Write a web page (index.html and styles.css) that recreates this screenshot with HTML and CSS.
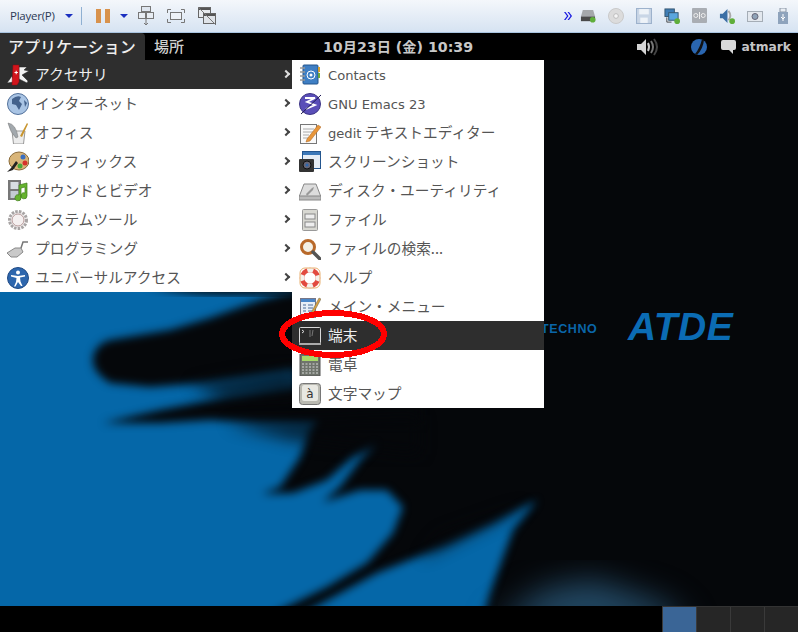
FILE: index.html
```html
<!DOCTYPE html>
<html lang="ja">
<head>
<meta charset="utf-8">
<title>ATDE</title>
<link rel="stylesheet" href="styles.css">
</head>
<body>
<div class="screen">
  <header class="toolbar">
    <span class="player">Player(P)</span>
    <svg class="caret" viewBox="0 0 8 4"><path d="M0 0h8L4 4z"/></svg>
    <span class="tb-sep"></span>
    <svg class="pause" viewBox="0 0 14 14"><rect width="5" height="14"/><rect x="9" width="5" height="14"/></svg>
    <svg class="caret caret-b" viewBox="0 0 8 4"><path d="M0 0h8L4 4z"/></svg>
    <svg class="tb-ic ic-a" viewBox="0 0 16 20"><g fill="none" stroke="#777"><rect x="3.500" y=".5" width="9" height="5" fill="#dfe6ef"/><rect x=".5" y="6.500" width="7" height="6" fill="#e8edf3"/><rect x="8.500" y="6.500" width="7" height="6" fill="#e8edf3"/><path d="M8 13v6M6 17l2 2 2-2"/></g></svg>
    <svg class="tb-ic ic-b" viewBox="0 0 18 14"><g fill="none" stroke="#777"><rect x="3.500" y="3.500" width="11" height="7" fill="#eef2f7"/><path d="M.5 4V.5H4M14 .5h3.500V4M.5 10v3.500H4M14 13.500h3.500V10"/></g></svg>
    <svg class="tb-ic ic-c" viewBox="0 0 18 18"><rect x=".5" y=".5" width="12" height="10" fill="#e8ebef" stroke="#666"/><rect x="5.500" y="6.500" width="12" height="10" fill="#dfe3e8" stroke="#666"/><rect x="1" y="1" width="11" height="2" fill="#555"/><rect x="6" y="7" width="11" height="2" fill="#555"/><path d="M0 0l18 18" stroke="#777"/></svg>
    <span class="tb-spacer"></span>
    <svg class="chev" viewBox="0 0 8 8"><path d="M0 0l3 4-3 4h1.500l3-4-3-4zM3.500 0l3 4-3 4H5l3-4-3-4z"/></svg>
    <div class="devices">
      <svg class="dev" viewBox="0 0 17 15"><path d="M3 1h11l2 7H1z" fill="#a5a8ab"/><rect x="1" y="8" width="15" height="5" fill="#4a4a4a"/><circle cx="13.500" cy="11.500" r="3" fill="#5fae3a"/></svg>
      <svg class="dev" viewBox="0 0 17 17"><circle cx="8.500" cy="8.500" r="8" fill="#dcdcdc" stroke="#c8c8c8"/><circle cx="8.500" cy="8.500" r="2.500" fill="#f5f5f5" stroke="#bbb"/></svg>
      <svg class="dev" viewBox="0 0 15 15"><rect x=".5" y=".5" width="14" height="14" fill="#c9d6e6" stroke="#9db2cc"/><rect x="3" y="1" width="9" height="5" fill="#eef3f8"/><rect x="4" y="9" width="7" height="5" fill="#eef3f8"/></svg>
      <svg class="dev" viewBox="0 0 17 17"><rect x="1" y="1" width="10" height="8" fill="#3f7db5" stroke="#33556f"/><rect x="5" y="5" width="10" height="8" fill="#5aa6de" stroke="#33556f"/><path d="M3 10v5h5" fill="none" stroke="#444"/><circle cx="14" cy="14" r="3" fill="#5fae3a"/></svg>
      <svg class="dev dev-wide" viewBox="0 0 15 15"><rect width="15" height="15" rx="1" fill="#a9adb3"/><circle cx="3.800" cy="7.500" r="2" fill="none" stroke="#eee"/><circle cx="11.200" cy="7.500" r="2" fill="none" stroke="#eee"/><path d="M7.500 4v7" stroke="#eee"/></svg>
      <svg class="dev" viewBox="0 0 17 17"><path d="M1 6h3l5-5v15l-5-5H1z" fill="#3a6ea5"/><path d="M10 3q4 5 0 10" fill="none" stroke="#aaa" stroke-width="2"/><circle cx="14" cy="14" r="3" fill="#5fae3a"/></svg>
      <svg class="dev" viewBox="0 0 16 12"><rect x=".5" y="1.500" width="15" height="10" fill="#e3e8ee" stroke="#a5adb6"/><circle cx="8" cy="6.500" r="3" fill="#8fa3b8" stroke="#667"/></svg>
      <svg class="dev dev-usb" viewBox="0 0 10 16"><rect x="2" y="0" width="6" height="4" fill="#e8edf3" stroke="#8a96a6"/><rect y="4" width="10" height="12" fill="#8ea3bc"/><path d="M5 6v7M3 9l2 2 2-2" stroke="#fff" fill="none"/></svg>
    </div>
  </header>

  <nav class="panel">
    <div class="panel-left">
      <span class="panel-menu is-open">アプリケーション</span>
      <span class="panel-menu">場所</span>
    </div>
    <span class="clock">10月23日 (金) 10:39</span>
    <div class="panel-right">
      <svg class="vol" viewBox="0 0 22 18"><path d="M0 6h4l5-5v16l-5-5H0z" fill="#d4d4d4"/><path d="M11 5q2 4 0 8" fill="none" stroke="#c8c8c8" stroke-width="2"/><path d="M14 3q4 6 0 12" fill="none" stroke="#777" stroke-width="2"/><path d="M17 1q6 8 0 16" fill="none" stroke="#444" stroke-width="2"/></svg>
      <svg class="ime" viewBox="0 0 16 16"><circle cx="8" cy="8" r="8" fill="#2a66b0"/><path d="M11 0Q9 9 4 15l2 1q6-6 7-15z" fill="#111"/></svg>
      <svg class="chat" viewBox="0 0 15 14"><path d="M2 0h11a2 2 0 0 1 2 2v6a2 2 0 0 1-2 2h-1v4L8 10H2a2 2 0 0 1-2-2V2a2 2 0 0 1 2-2z" fill="#d8d8d8"/></svg>
      <span class="user">atmark</span>
    </div>
  </nav>

  <main class="desktop">
    <svg class="wallpaper" viewBox="0 60 798 546" preserveAspectRatio="none">
      <defs>
        <filter id="b1" x="-20%" y="-20%" width="140%" height="140%" color-interpolation-filters="sRGB"><feGaussianBlur stdDeviation="4.500"/></filter>
        <filter id="b2" x="-30%" y="-30%" width="160%" height="160%" color-interpolation-filters="sRGB"><feGaussianBlur stdDeviation="8"/></filter>
        <filter id="b3" x="-40%" y="-40%" width="180%" height="180%" color-interpolation-filters="sRGB"><feGaussianBlur stdDeviation="16"/></filter>
      </defs>
      <rect x="0" y="60" width="798" height="546" fill="#05070a"/>
      <path class="wp-blue" filter="url(#b1)" d="M-30 200H295V392L320 408 315 423 310 430 300 457 280 487 262 494 293 493 327 480 353 457 377 443 360 460 340 487 323 502 360 490 387 490 403 507 393 533 367 563 327 587 270 615H-30z"/>
      <path class="wp-blue" filter="url(#b1)" d="M300 615L377 573 427 553 493 523 537 500 513 530 503 557 490 593 484 615z"/>
      <path class="wp-dim" filter="url(#b3)" d="M490 630L543 590 593 580 665 605 690 630z"/>
      <path class="wp-dark" filter="url(#b1)" d="M93 357C96 345 104 342 110 340L170 330 210 318 260 300 287 293H420V390L293 370 247 377 203 383 150 387 110 383C98 375 92 368 93 357z"/>
      <path class="wp-dark" filter="url(#b1)" d="M103 423L160 410 227 397 293 387H420V425L260 423 210 420 160 423z"/>
      <path class="wp-dark" filter="url(#b1)" d="M147 285H300V293C240 295 190 297 147 285z"/>
      <path class="wp-strip" filter="url(#b2)" d="M190 385L300 365V395L225 400z"/>
      <path class="wp-strip" filter="url(#b2)" d="M225 424L420 415V455L290 440z"/>
      <path class="wp-strip" filter="url(#b2)" d="M420 560L500 520 530 505 510 510 440 535z"/>
    </svg>
    <span class="brand-techno">TECHNO</span>
    <span class="brand-atde">ATDE</span>

    <div class="menus">
      <ul class="menu menu-main">
        <li class="item is-active"><svg class="ic" viewBox="0 0 22 22"><path d="M0 19l5-7 2 6zM12 3h8l-3 3 5 1-7 4 6 6-1 2-8-4z" fill="#f2f2f2" stroke="#222" stroke-width=".5"/><path d="M6 1h6v17l-2 3H5z" fill="#d2151c" stroke="#8a0d12" stroke-width=".5"/><path d="M7.500 8h1.200V6.800h1V8h1.200v1H9.700v1.200h-1V9H7.500z" fill="#fff"/></svg><span class="label">アクセサリ</span><span class="arrow"></span></li>
        <li class="item"><svg class="ic" viewBox="0 0 22 22"><circle cx="11" cy="11" r="10.500" fill="#a9c4e4" stroke="#52719b"/><path d="M5 6q5-4 9-2l-2 4 3 3-3 6-3-5-4-1z" fill="#44628c"/><path d="M17 7l3 3-2 4z" fill="#44628c"/></svg><span class="label">インターネット</span><span class="arrow"></span></li>
        <li class="item"><svg class="ic" viewBox="0 0 22 22"><path d="M5 9h13l-1.500 13H6.500z" fill="#ececec" stroke="#999"/><path d="M1 1q8 1 10 14l-2 1Q3 10 1 1z" fill="#a2a8ad" stroke="#777" stroke-width=".5"/><path d="M20 1l1 1-6 13-2-1z" fill="#c8952e"/></svg><span class="label">オフィス</span><span class="arrow"></span></li>
        <li class="item"><svg class="ic" viewBox="0 0 22 22"><ellipse cx="12" cy="10" rx="10" ry="9" fill="#d9b579" stroke="#8a6a38"/><circle cx="16" cy="6" r="2.500" fill="#3a6fc0"/><circle cx="18" cy="12" r="2.500" fill="#d6322c"/><circle cx="13" cy="15" r="2.500" fill="#4aa83a"/><path d="M9 10l-5 7-4 4 6-2 5-7z" fill="#222"/></svg><span class="label">グラフィックス</span><span class="arrow"></span></li>
        <li class="item"><svg class="ic" viewBox="0 0 22 22"><rect x="1" y="0" width="13" height="20" fill="#777"/><rect x="3.500" y="2" width="8" height="7" fill="#d8dde2"/><rect x="3.500" y="11" width="8" height="7" fill="#c4cbd2"/><path d="M12 5l8-2v13a3 3 0 1 1-2-3V7l-4 1v10a3 3 0 1 1-2-3z" fill="#66b32e" stroke="#3f7d1a" stroke-width=".7"/></svg><span class="label">サウンドとビデオ</span><span class="arrow"></span></li>
        <li class="item"><svg class="ic" viewBox="0 0 22 22"><circle cx="11" cy="11" r="8.500" fill="#f1eeee" stroke="#a8a4a4" stroke-width="3" stroke-dasharray="2.500 1.200"/><circle cx="11" cy="11" r="6" fill="#f5f0f0" stroke="#b79a9a"/></svg><span class="label">システムツール</span><span class="arrow"></span></li>
        <li class="item"><svg class="ic" viewBox="0 0 22 22"><path d="M0 15l8-5h6l2 4-6 5H4z" fill="#c9c9c9" stroke="#888"/><path d="M14 10l2-6h5" fill="none" stroke="#777" stroke-width="1.500"/></svg><span class="label">プログラミング</span><span class="arrow"></span></li>
        <li class="item"><svg class="ic" viewBox="0 0 22 22"><circle cx="11" cy="11" r="10.500" fill="#2d66ad" stroke="#1f4a85"/><circle cx="11" cy="5.500" r="2" fill="#fff"/><path d="M4 8l7 1 7-1v1.500l-5 1 .500 4 2 4.500h-1.500L11 15l-2.500 4.500H7l2-4.500.500-4-5.500-1.500z" fill="#fff"/></svg><span class="label">ユニバーサルアクセス</span><span class="arrow"></span></li>
      </ul>
      <ul class="menu menu-sub">
        <li class="item"><svg class="ic" viewBox="0 0 22 22"><rect x="4" y="1" width="15" height="19" rx="1" fill="#3f7fc4" stroke="#23548c"/><rect x="19" y="3" width="2" height="5" fill="#d8a030"/><rect x="19" y="9" width="2" height="5" fill="#6aa83c"/><path d="M1 4h5M1 8h5M1 12h5M1 16h5" stroke="#999" stroke-width="1.500"/><circle cx="12" cy="11" r="4" fill="none" stroke="#fff"/><circle cx="12" cy="11" r="1.500" fill="#fff"/></svg><span class="label latin">Contacts</span></li>
        <li class="item"><svg class="ic" viewBox="0 0 22 22"><circle cx="11" cy="11" r="10.500" fill="#5a4eb8" stroke="#3d3585"/><path d="M6 5h10L8 9l8 3-9 4" fill="none" stroke="#fff" stroke-width="1.800"/><path d="M22 2L2 21" stroke="#1f1a55"/></svg><span class="label latin">GNU Emacs 23</span></li>
        <li class="item"><svg class="ic" viewBox="0 0 22 22"><rect x="1.500" y="2.500" width="16" height="19" fill="#fafafa" stroke="#777"/><path d="M4 7h11M4 10h11M4 13h6M4 16h6" stroke="#aaa"/><path d="M8 17l11-14 3 2-11 14-4 1z" fill="#e8963a" stroke="#a86220" stroke-width=".5"/></svg><span class="label"><span class="latin">gedit</span> テキストエディター</span></li>
        <li class="item"><svg class="ic" viewBox="0 0 22 22"><rect x="3.500" y=".5" width="18" height="17" fill="#e6edf5" stroke="#23558e"/><rect x="4" y="1" width="17" height="3" fill="#3c78b8"/><rect x="0" y="8" width="15" height="13" rx="1" fill="#333"/><circle cx="8" cy="14" r="4" fill="#667" stroke="#111"/><circle cx="8" cy="14" r="1.500" fill="#2d66ad"/></svg><span class="label">スクリーンショット</span></li>
        <li class="item"><svg class="ic" viewBox="0 0 22 22"><path d="M5 4h12l5 13H0z" fill="#ddd" stroke="#888"/><rect y="16" width="22" height="4" fill="#bbb" stroke="#888"/><path d="M7 14l6-6 2-1-1 3-6 6z" fill="#999"/></svg><span class="label">ディスク・ユーティリティ</span></li>
        <li class="item"><svg class="ic" viewBox="0 0 22 22"><rect x="3.500" y=".5" width="15" height="21" rx="1" fill="#d8d8d2" stroke="#999"/><rect x="6" y="5" width="10" height="5" fill="#eee" stroke="#888"/><rect x="6" y="13" width="10" height="5" fill="#eee" stroke="#888"/></svg><span class="label">ファイル</span></li>
        <li class="item"><svg class="ic" viewBox="0 0 22 22"><circle cx="9" cy="9" r="6.500" fill="#f3f0e6" stroke="#b8692a" stroke-width="3"/><path d="M14 14l7 7" stroke="#555" stroke-width="3.500" stroke-linecap="round"/></svg><span class="label">ファイルの検索...</span></li>
        <li class="item"><svg class="ic" viewBox="0 0 22 22"><circle cx="11" cy="11" r="8" fill="none" stroke="#e24a3f" stroke-width="4.500"/><circle cx="11" cy="11" r="8" fill="none" stroke="#f4f1ec" stroke-width="4.500" stroke-dasharray="6 6.570" stroke-dashoffset="3"/><rect x="1" y="1" width="20" height="20" rx="5" fill="none" stroke="#e8b070"/></svg><span class="label">ヘルプ</span></li>
        <li class="item"><svg class="ic" viewBox="0 0 22 22"><rect x="1.500" y="2.500" width="15" height="19" fill="#e8eef6" stroke="#778"/><rect x="2" y="3" width="14" height="3" fill="#4a86c8"/><path d="M4 9h3M4 12h3M4 15h3M9 9h5M9 12h5M9 15h5" stroke="#4a6a98"/><path d="M13 15l7-13 2 1-7 13-3 2z" fill="#d8a040" stroke="#665" stroke-width=".5"/></svg><span class="label">メイン・メニュー</span></li>
        <li class="item is-active"><svg class="ic" viewBox="0 0 22 22"><rect x=".5" y="2.500" width="21" height="16" rx="1" fill="#2b2b2b" stroke="#d8d8d8"/><rect y="18" width="22" height="2" fill="#aaa"/><path d="M3 5l2 1.500L3 8" fill="none" stroke="#ddd"/><path d="M11 5v7M14 5l-1 6" stroke="#777"/></svg><span class="label">端末</span></li>
        <li class="item"><svg class="ic" viewBox="0 0 22 22"><rect x="1" y="0" width="20" height="22" fill="#6f746c" stroke="#555"/><rect x="3" y="2" width="16" height="5" fill="#a8d868"/><path d="M3 10h16M3 13h16M3 16h16M3 19h16" stroke="#d8d8d8" stroke-dasharray="2 1.500"/></svg><span class="label">電卓</span></li>
        <li class="item"><svg class="ic" viewBox="0 0 22 22"><rect x=".5" y=".5" width="21" height="21" rx="3" fill="#b9b9b1" stroke="#777"/><rect x="3" y="2" width="16" height="16" rx="2" fill="#e8e8e2"/><text class="ic-char" x="11" y="15" text-anchor="middle">à</text></svg><span class="label">文字マップ</span></li>
      </ul>
    </div>
    <svg class="mark" viewBox="0 0 110 50"><ellipse cx="55" cy="25" rx="51" ry="21" fill="none" stroke="#f00" stroke-width="6"/></svg>
  </main>

  <footer class="taskbar">
    <div class="workspaces">
      <span class="ws is-current"></span>
      <span class="ws"></span>
      <span class="ws"></span>
      <span class="ws"></span>
    </div>
  </footer>
</div>
</body>
</html>
```

FILE: styles.css
```css
* { box-sizing: border-box; }
html, body { margin: 0; padding: 0; }
body { width: 798px; height: 632px; overflow: hidden; background: #000; font-family: "Noto Sans CJK JP", "DejaVu Sans", sans-serif; }
ul { list-style: none; margin: 0; padding: 0; }
svg { display: block; flex: none; }

.screen { width: 798px; height: 632px; display: flex; flex-direction: column; }

.toolbar { height: 33px; flex: none; display: flex; align-items: center; padding: 0 10px 1px 10px; background: linear-gradient(#f4f7fb, #d6e3f2); border-bottom: 1px solid #a9c4e0; }
.player { font: 11.500px "Open Sans", "DejaVu Sans", sans-serif; color: #2c3a55; letter-spacing: -.25px; width: 56px; }
.caret { width: 8px; height: 4px; fill: #1a2fc0; margin-left: -1px; }
.tb-sep { width: 1px; height: 18px; background: #8fb0d2; margin-left: 8px; }
.pause { width: 14px; height: 14px; fill: #d8924c; margin-left: 14px; }
.caret-b { margin-left: 10px; }
.ic-a { width: 16px; height: 20px; margin-left: 10px; }
.ic-b { width: 18px; height: 14px; margin-left: 13px; }
.ic-c { width: 18px; height: 18px; margin-left: 13px; }
.tb-spacer { flex: 1; }
.chev { width: 8px; height: 8px; fill: #1616e0; }
.devices { display: flex; align-items: center; gap: 12px; margin-left: 8px; }
.dev { width: 16px; height: 16px; }
.dev-wide { width: 15px; height: 15px; }
.dev-usb { width: 10px; height: 16px; margin-left: 3px; }

.panel { height: 27px; flex: none; background: #000; display: flex; align-items: stretch; position: relative; color: #cfcfcf; font-size: 15px; font-weight: 500; }
.panel-left { display: flex; }
.panel-menu { display: flex; align-items: center; padding: 0 0 2px 9px; }
.panel-menu.is-open { background: #2e2e2e; color: #eee; border-radius: 0 4px 0 0; width: 145px; padding-left: 8px; font-size: 16px; }
.clock { position: absolute; left: 323px; top: 0; height: 27px; display: flex; align-items: center; padding-bottom: 1px; font: 700 14.200px "DejaVu Sans", "Noto Sans CJK JP", sans-serif; color: #c8c8c8; }
.panel-right { margin-left: auto; display: flex; align-items: center; padding-right: 7px; }
.vol { width: 22px; height: 18px; margin-right: 32px; }
.ime { width: 16px; height: 16px; margin-right: 14px; }
.chat { width: 15px; height: 14px; margin-right: 5px; }
.user { font: 700 12.300px "DejaVu Sans", sans-serif; color: #c4c4c4; }

.desktop { flex: 1; min-height: 0; position: relative; overflow: hidden; }
.wallpaper { position: absolute; inset: 0; width: 100%; height: 100%; }
.wp-blue { fill: #0567a8; }
.wp-dark { fill: #05070a; }
.wp-dim { fill: #234a66; }
.wp-strip { fill: #05070a; opacity: .7; }
.brand-techno { position: absolute; left: 541px; top: 262px; font: 700 12.500px "Liberation Sans", sans-serif; letter-spacing: .6px; color: #0a65a8; }
.brand-atde { position: absolute; left: 628px; top: 245px; font: italic 700 39px "Liberation Sans", sans-serif; letter-spacing: .5px; color: #0b6cb4; }

.menus { position: absolute; left: 0; top: 0; display: flex; align-items: flex-start; }
.menu { background: #fff; color: #555; font-size: 14.700px; }
.menu-main { width: 292px; }
.menu-sub { width: 252px; }
.item { height: 29px; display: flex; align-items: center; padding-left: 7px; position: relative; white-space: nowrap; }
.item.is-active { background: #2e2e2e; color: #eee; }
.ic { width: 22px; height: 22px; }
.ic-char { font: 12px "DejaVu Sans", sans-serif; fill: #333; }
.label { margin-left: 7px; margin-bottom: 2px; }
.menu-main .label { margin-left: 6px; }
.latin { font: 13.100px "DejaVu Sans", sans-serif; }
.label.latin { margin-bottom: 0; margin-top: 1px; }
.arrow { position: absolute; right: 3px; top: 11px; width: 6px; height: 6px; border-top: 2px solid #444; border-right: 2px solid #444; transform: rotate(45deg); }
.is-active .arrow { border-color: #ddd; }

.mark { position: absolute; left: 278px; top: 249px; width: 110px; height: 50px; shape-rendering: crispEdges; }

.taskbar { height: 26px; flex: none; background: #000; display: flex; justify-content: flex-end; }
.workspaces { display: flex; border-top: 1px solid #333; }
.ws { width: 34px; background: #262626; border-left: 1px solid #3a3a3a; }
.ws.is-current { background: #3a6596; }
```
